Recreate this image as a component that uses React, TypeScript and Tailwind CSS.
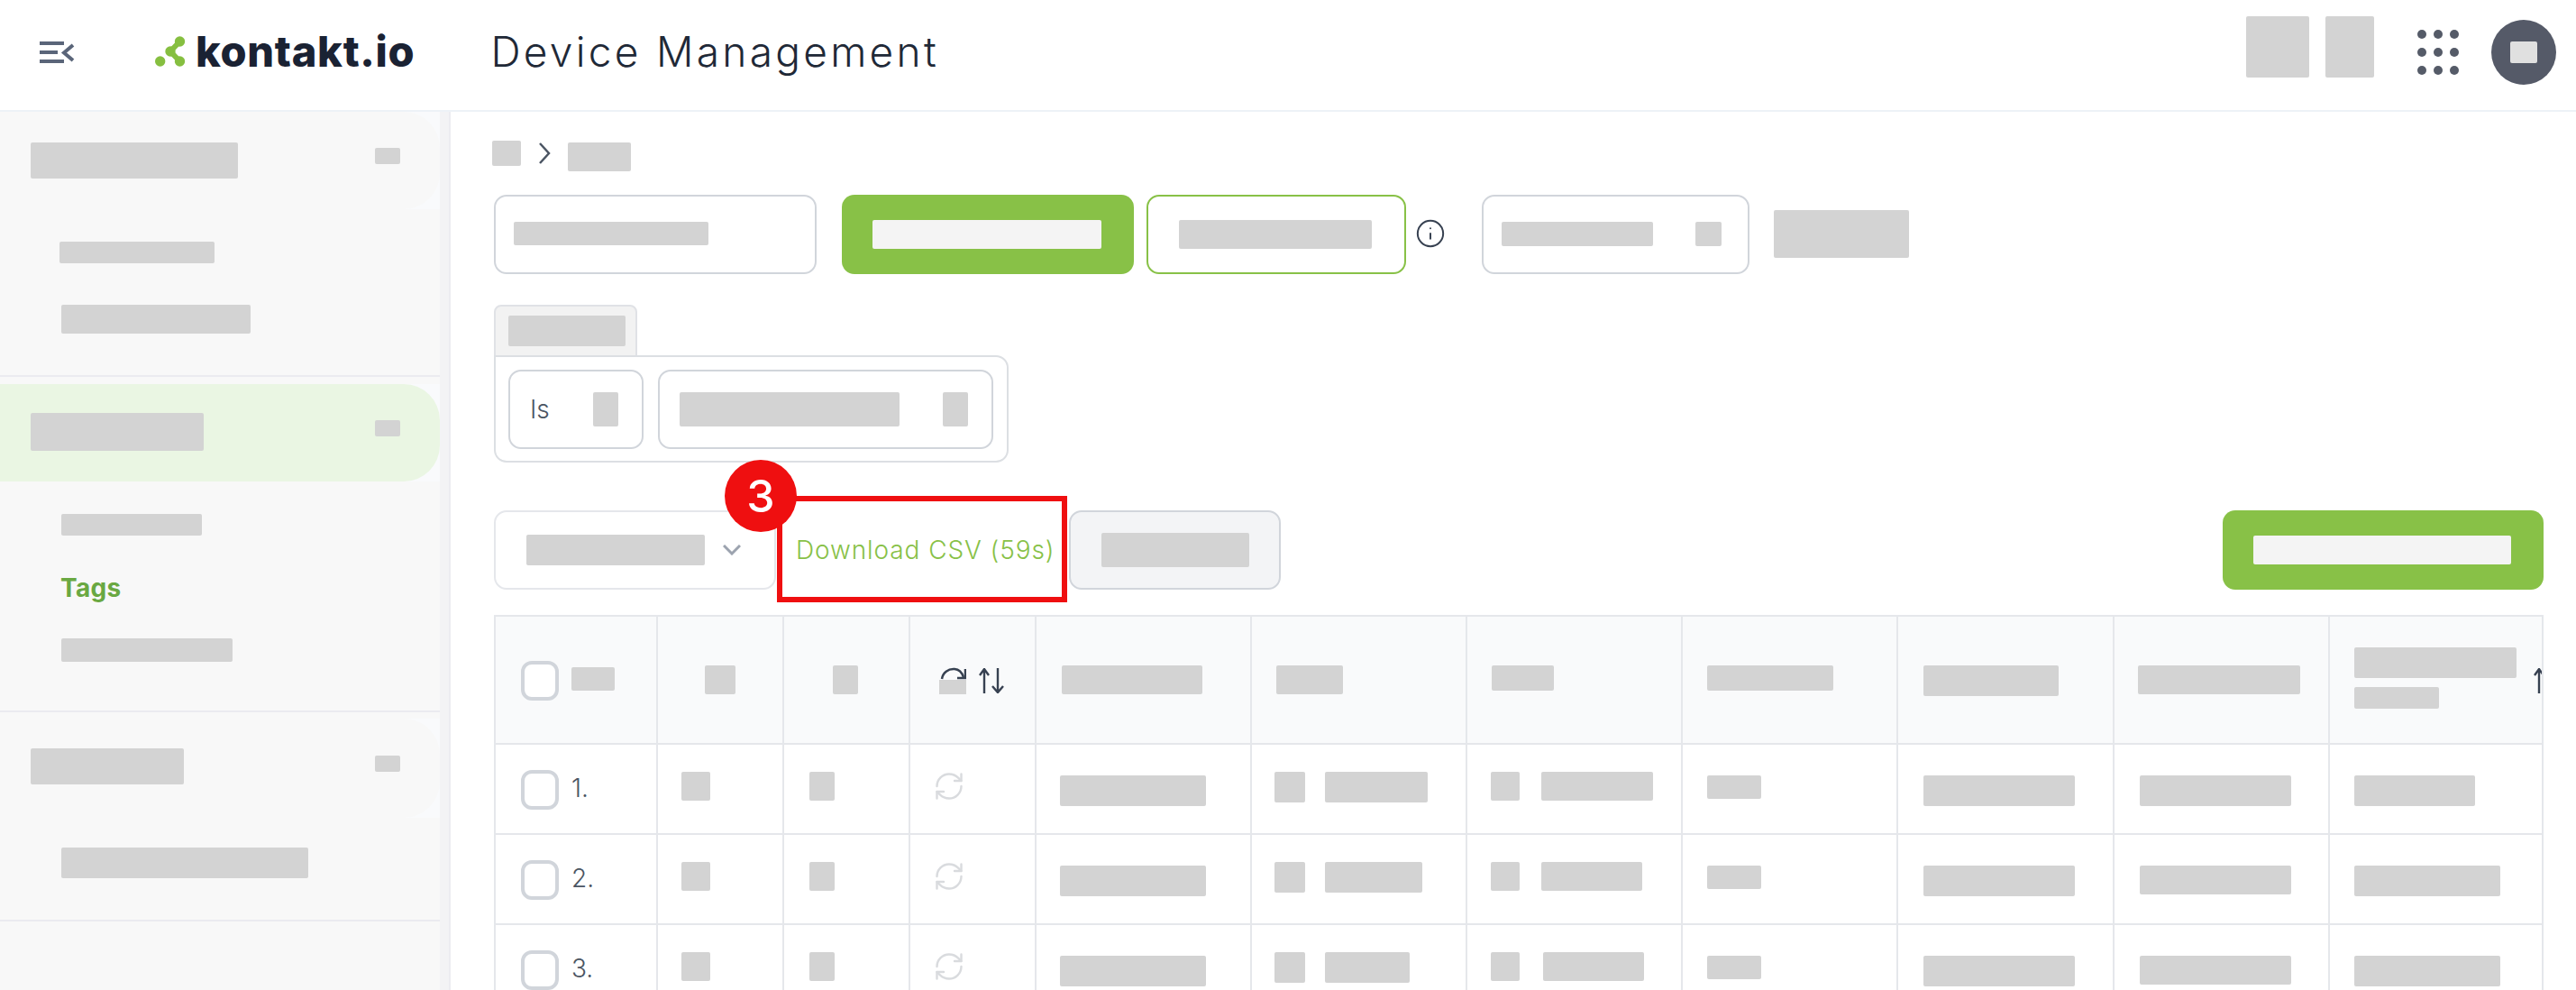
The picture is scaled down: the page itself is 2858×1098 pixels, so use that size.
import React from "react";
import { Info, RefreshCw } from "lucide-react";

const bar = "rounded-[2px] bg-[#d3d3d3] shrink-0";

function Sort({ className = "" }: { className?: string }) {
  return (
    <svg viewBox="0 0 28 28" width={28} height={28} fill="none" stroke="#374151" strokeWidth={2.4} className={`shrink-0 ${className}`}>
      <path d="M6 28V1M1 8l5-7 5 7" />
      <path d="M21 0v27M15 20l6 7 6-7" />
    </svg>
  );
}

function Check() {
  return <div className="h-[44px] w-[42px] shrink-0 rounded-[12px] border-[4px] border-[#d1d5db] bg-white" />;
}

const cell = "border-r-2 border-b-2 border-[#e5e7eb] flex items-start overflow-hidden";

function HeaderRow() {
  const c = `${cell} h-[142px] bg-[#f9fafb]`;
  return (
    <>
      <div className={`${c} pl-[28px] pt-[49px]`}>
        <Check />
        <div className={`${bar} ml-[14px] mt-[7px] h-[26px] w-[48px]`} />
      </div>
      <div className={`${c} pl-[52px] pt-[54px]`}><div className={`${bar} h-[32px] w-[34px]`} /></div>
      <div className={`${c} pl-[54px] pt-[54px]`}><div className={`${bar} h-[32px] w-[28px]`} /></div>
      <div className={`${c} pl-[32px] pt-[56px]`}>
        <div className="flex w-[30px] shrink-0 flex-col">
          <svg viewBox="0 0 30 14" width={30} height={14} fill="none" stroke="#374151" strokeWidth={2.5}>
            <path d="M3 13C4 6 10 1.500 17 2c4 .3 8 3 10 9" />
            <path d="M29 2v10H20" />
          </svg>
          <div className="h-[16px] w-[30px] bg-[#d3d3d3]" />
        </div>
        <Sort className="ml-[14px] mt-[1px]" />
      </div>
      <div className={`${c} pl-[28px] pt-[54px]`}><div className={`${bar} h-[32px] w-[156px]`} /></div>
      <div className={`${c} pl-[27px] pt-[54px]`}><div className={`${bar} h-[32px] w-[74px]`} /></div>
      <div className={`${c} pl-[27px] pt-[54px]`}><div className={`${bar} h-[28px] w-[69px]`} /></div>
      <div className={`${c} pl-[27px] pt-[54px]`}><div className={`${bar} h-[28px] w-[140px]`} /></div>
      <div className={`${c} pl-[28px] pt-[54px]`}><div className={`${bar} h-[34px] w-[150px]`} /></div>
      <div className={`${c} pl-[26px] pt-[54px]`}><div className={`${bar} h-[32px] w-[180px]`} /></div>
      <div className={`${c} pl-[27px] pt-[34px]`}>
        <div className="flex w-[180px] shrink-0 flex-col gap-[10px]">
          <div className={`${bar} h-[34px] w-[180px]`} />
          <div className={`${bar} h-[24px] w-[94px]`} />
        </div>
        <Sort className="ml-[19px] mt-[23px]" />
      </div>
    </>
  );
}

type RowData = {
  n: string;
  nameW: string;
  nameGap: string;
  dateW: string;
  dateGap: string;
  c9: string;
  c10: string;
};

const rows: RowData[] = [
  { n: "1.", nameW: "w-[114px]", nameGap: "ml-[22px]", dateW: "w-[124px]", dateGap: "ml-[24px]", c9: "h-[34px] w-[168px]", c10: "w-[134px]" },
  { n: "2.", nameW: "w-[108px]", nameGap: "ml-[22px]", dateW: "w-[112px]", dateGap: "ml-[24px]", c9: "h-[32px] w-[168px]", c10: "w-[162px]" },
  { n: "3.", nameW: "w-[94px]", nameGap: "ml-[22px]", dateW: "w-[112px]", dateGap: "ml-[26px]", c9: "h-[32px] w-[168px]", c10: "w-[162px]" },
];

function Row({ r }: { r: RowData }) {
  const c = `${cell} h-[100px] bg-white`;
  return (
    <>
      <div className={`${c} pl-[28px] pt-[28px]`}>
        <Check />
        <span className="ml-[14px] mt-[2px] text-[28px] font-light leading-[36px] text-[#4b5563]">{r.n}</span>
      </div>
      <div className={`${c} pl-[26px] pt-[30px]`}><div className={`${bar} h-[32px] w-[32px]`} /></div>
      <div className={`${c} pl-[28px] pt-[30px]`}><div className={`${bar} h-[32px] w-[28px]`} /></div>
      <div className={`${c} pl-[25px] pt-[28px]`}>
        <RefreshCw size={36} strokeWidth={1.6} color="#d9dbde" className="shrink-0" />
      </div>
      <div className={`${c} pl-[26px] pt-[34px]`}><div className={`${bar} h-[34px] w-[162px]`} /></div>
      <div className={`${c} pl-[25px] pt-[30px]`}>
        <div className={`${bar} h-[34px] w-[34px]`} />
        <div className={`${bar} h-[34px] ${r.nameGap} ${r.nameW}`} />
      </div>
      <div className={`${c} pl-[26px] pt-[30px]`}>
        <div className={`${bar} h-[32px] w-[32px]`} />
        <div className={`${bar} h-[32px] ${r.dateGap} ${r.dateW}`} />
      </div>
      <div className={`${c} pl-[27px] pt-[34px]`}><div className={`${bar} h-[26px] w-[60px]`} /></div>
      <div className={`${c} pl-[28px] pt-[34px]`}><div className={`${bar} h-[34px] w-[168px]`} /></div>
      <div className={`${c} pl-[28px] pt-[34px]`}><div className={`${bar} ${r.c9}`} /></div>
      <div className={`${c} pl-[27px] pt-[34px]`}><div className={`${bar} h-[34px] ${r.c10}`} /></div>
    </>
  );
}

function SideDivider() {
  return <div className="h-[2px] w-full bg-[#ebebf0]" />;
}

function Sidebar() {
  return (
    <aside className="flex h-full w-[500px] shrink-0">
      <div className="flex h-full w-[488px] flex-col bg-[#f8f8f8]">
        <div className="bg-[#f9fafc]">
          <div className="flex h-[108px] items-start justify-between rounded-r-[40px] bg-[#f8f8f8] pl-[34px] pr-[44px] pt-[34px]">
            <div className={`${bar} h-[40px] w-[230px]`} />
            <div className={`${bar} mt-[6px] h-[18px] w-[28px]`} />
          </div>
        </div>
        <div className={`${bar} ml-[66px] mt-[36px] h-[24px] w-[172px]`} />
        <div className={`${bar} ml-[68px] mt-[46px] h-[32px] w-[210px]`} />
        <div className="mt-[46px]"><SideDivider /></div>

        <div className="mt-[8px] bg-[#f9fafc]">
          <div className="flex h-[108px] items-start justify-between rounded-r-[40px] bg-[#eaf6e3] pl-[34px] pr-[44px] pt-[32px]">
            <div className={`${bar} h-[42px] w-[192px]`} />
            <div className={`${bar} mt-[8px] h-[18px] w-[28px]`} />
          </div>
        </div>
        <div className={`${bar} ml-[68px] mt-[36px] h-[24px] w-[156px]`} />
        <div className="ml-[67px] mt-[40px] h-[36px] text-[28px] font-bold leading-[36px] tracking-[0.3px] text-[#6aa842]">Tags</div>
        <div className={`${bar} ml-[68px] mt-[38px] h-[26px] w-[190px]`} />
        <div className="mt-[54px]"><SideDivider /></div>

        <div className="mt-[7px] bg-[#f9fafc]">
          <div className="flex h-[110px] items-start justify-between rounded-r-[40px] bg-[#f8f8f8] pl-[34px] pr-[44px] pt-[33px]">
            <div className={`${bar} h-[40px] w-[170px]`} />
            <div className={`${bar} mt-[8px] h-[18px] w-[28px]`} />
          </div>
        </div>
        <div className={`${bar} ml-[68px] mt-[33px] h-[34px] w-[274px]`} />
        <div className="mt-[46px]"><SideDivider /></div>
      </div>
      <div className="h-full w-[10px] bg-[#f3f3f5]" />
      <div className="h-full w-[2px] bg-[#ececf1]" />
    </aside>
  );
}

function Header() {
  return (
    <header className="flex h-[124px] shrink-0 items-start border-b-2 border-[#edf2f7] bg-white">
      <svg viewBox="0 0 40 24" width={40} height={24} className="ml-[44px] mt-[46px] shrink-0" fill="none">
        <path d="M0 2h27M0 12h20M0 22h27" stroke="#5a6579" strokeWidth={4} />
        <path d="M37 4l-10 8.500 10 8.500" stroke="#5a6579" strokeWidth={4} />
      </svg>
      <svg viewBox="0 0 34 34" width={34} height={34} className="ml-[88px] mt-[40px] shrink-0" fill="#86bf40">
        <circle cx="5.700" cy="28" r="5.700" />
        <circle cx="27.500" cy="6" r="5.700" />
        <circle cx="27.500" cy="28" r="5.700" />
        <circle cx="17" cy="17" r="5.700" />
        <path d="M17 17L27.500 6M17 17L27.500 28" stroke="#86bf40" strokeWidth={6} />
      </svg>
      <div className="ml-[11px] mt-[29px] whitespace-nowrap text-[47px] font-extrabold leading-[56px] tracking-[0.7px] text-[#1a2233]">kontakt.io</div>
      <div className="ml-[84px] mt-[29px] whitespace-nowrap text-[46px] font-light leading-[56px] tracking-[3.3px] text-[#1f2937]">Device Management</div>
      <div className="ml-auto mr-[22px] flex items-start">
        <div className={`${bar} mt-[18px] h-[68px] w-[70px]`} />
        <div className={`${bar} ml-[18px] mt-[18px] h-[68px] w-[54px]`} />
        <div className="ml-[48px] mt-[33px] grid grid-cols-3 gap-x-[8px] gap-y-[10px]">
          {Array.from({ length: 9 }).map((_, i) => (
            <div key={i} className="h-[10px] w-[10px] rounded-full bg-[#555b68]" />
          ))}
        </div>
        <div className="ml-[36px] mt-[22px] flex h-[72px] w-[72px] items-center justify-center rounded-full bg-[#555a68]">
          <div className="h-[24px] w-[30px] rounded-[2px] bg-[#e0e0e0]" />
        </div>
      </div>
    </header>
  );
}

function Main() {
  return (
    <main className="min-w-0 flex-1 pl-[48px] pr-[36px]">
      <div className="mt-[32px] flex h-[34px] items-start">
        <div className={`${bar} -ml-[2px] h-[28px] w-[32px]`} />
        <svg viewBox="0 0 14 24" width={14} height={24} fill="none" stroke="#4b5563" strokeWidth={2.5} className="ml-[19px] mt-[2px]">
          <path d="M2 1l10 11L2 23" />
        </svg>
        <div className={`${bar} ml-[19px] mt-[2px] h-[32px] w-[70px]`} />
      </div>

      <div className="mt-[26px] flex h-[88px] items-start">
        <div className="h-[88px] w-[358px] rounded-[14px] border-2 border-[#d1d5db] pl-[20px] pt-[28px]">
          <div className={`${bar} h-[26px] w-[216px]`} />
        </div>
        <div className="ml-[28px] flex h-[88px] w-[324px] items-center rounded-[14px] bg-[#88c147] pl-[34px]">
          <div className="h-[32px] w-[254px] rounded-[2px] bg-[#f4f4f4]" />
        </div>
        <div className="ml-[14px] flex h-[88px] w-[288px] items-center rounded-[14px] border-2 border-[#88c147] pl-[34px]">
          <div className={`${bar} h-[32px] w-[214px]`} />
        </div>
        <Info size={34} strokeWidth={1.4} color="#374151" className="ml-[10px] mt-[26px] shrink-0" />
        <div className="ml-[40px] flex h-[88px] w-[297px] items-start rounded-[14px] border-2 border-[#d1d5db] pl-[20px] pt-[28px]">
          <div className={`${bar} h-[27px] w-[168px]`} />
          <div className={`${bar} ml-[47px] h-[27px] w-[29px]`} />
        </div>
        <div className={`${bar} ml-[27px] mt-[17px] h-[53px] w-[150px]`} />
      </div>

      <div className="mt-[34px] h-[58px] w-[159px] rounded-t-[8px] border-2 border-[#e0e2e6] bg-[#f2f2f2] pl-[14px] pt-[10px]">
        <div className={`${bar} h-[34px] w-[130px]`} />
      </div>
      <div className="relative -mt-[2px] flex h-[119px] w-[571px] gap-[16px] rounded-[14px] rounded-tl-none border-2 border-[#dcdfe3] bg-white p-[14px]">
        <div className="flex h-[88px] w-[150px] items-center rounded-[14px] border-2 border-[#d1d5db] pl-[22px]">
          <span className="w-[70px] text-[28px] font-light leading-[36px] text-[#4b5563]">Is</span>
          <div className={`${bar} h-[38px] w-[28px]`} />
        </div>
        <div className="flex h-[88px] w-[372px] items-center rounded-[14px] border-2 border-[#d1d5db] pl-[22px]">
          <div className={`${bar} h-[38px] w-[244px]`} />
          <div className={`${bar} ml-[48px] h-[38px] w-[28px]`} />
        </div>
      </div>

      <div className="mt-[53px] flex h-[88px] items-start">
        <div className="flex h-[88px] w-[313px] items-center rounded-[14px] border-2 border-[#e5e7eb] pl-[34px]">
          <div className={`${bar} h-[34px] w-[198px]`} />
          <svg viewBox="0 0 20 12" width={20} height={12} fill="none" stroke="#9ca3af" strokeWidth={3} className="ml-[20px]">
            <path d="M1 1l9 9 9-9" />
          </svg>
        </div>
        <div className="relative flex h-[88px] w-[325px] items-center pl-[22px]">
          <span className="whitespace-nowrap text-[28px] font-light leading-[36px] tracking-[0.9px] text-[#88c147]">Download CSV (59s)</span>
          <div className="absolute -top-[16px] left-[1px] h-[118px] w-[322px] border-[6px] border-[#ef0f10]" />
          <div className="absolute -left-[57px] -top-[56px] flex h-[80px] w-[80px] items-center justify-center rounded-full bg-[#ef0f10] text-[50px] font-medium leading-none text-white">3</div>
        </div>
        <div className="flex h-[88px] w-[235px] items-center rounded-[14px] border-2 border-[#d1d5db] bg-[#f3f4f6] pl-[34px]">
          <div className={`${bar} h-[38px] w-[164px]`} />
        </div>
        <div className="ml-auto flex h-[88px] w-[356px] items-center rounded-[14px] bg-[#88c147] pl-[34px]">
          <div className="h-[32px] w-[286px] rounded-[2px] bg-[#f4f4f4]" />
        </div>
      </div>

      <div className="mt-[28px] grid grid-cols-[180px_140px_140px_140px_239px_239px_239px_239px_240px_239px_237px] border-l-2 border-t-2 border-[#e5e7eb]">
        <HeaderRow />
        {rows.map((r) => (
          <Row key={r.n} r={r} />
        ))}
      </div>
    </main>
  );
}

export default function App() {
  return (
    <div className="flex h-[1098px] w-[2858px] flex-col overflow-hidden bg-white font-['Inter',sans-serif]">
      <Header />
      <div className="flex min-h-0 flex-1">
        <Sidebar />
        <Main />
      </div>
    </div>
  );
}
